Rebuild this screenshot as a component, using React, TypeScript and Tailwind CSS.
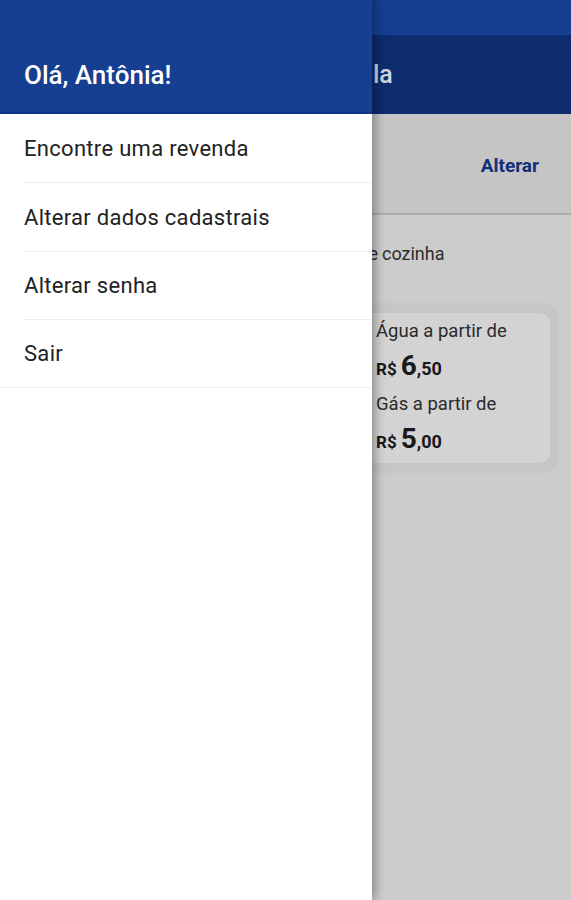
import React from "react";

const font = { fontFamily: "Roboto, 'Noto Sans', Arial, sans-serif" };

function MenuItem({ label, full, h }: { label: string; full?: boolean; h: string }) {
  return (
    <div className={`relative flex items-center ${h}`}>
      <span className="pl-6 text-[22px] tracking-[0.3px] text-[#222222] leading-none">{label}</span>
      <div
        className={
          full
            ? "absolute bottom-0 left-0 right-0 h-px bg-[#ececec]"
            : "absolute bottom-0 left-6 right-0 h-px bg-[#ececec]"
        }
      />
    </div>
  );
}

export default function App() {
  return (
    <div className="relative w-[571px] h-[900px] overflow-hidden bg-[#cccccc]" style={font}>
      {/* background page (dimmed) */}
      <div className="flex flex-col h-full">
        <div className="h-[35px] bg-[#163e91]" />
        <div className="h-[79px] bg-[#0c2c6d] flex items-center">
          <div className="w-[373px] text-right text-[25px] font-medium text-[#d2d5dd] whitespace-nowrap overflow-hidden">
            Revenda Vi
          </div>
          <span className="text-[25px] font-medium text-[#d2d5dd]">la</span>
        </div>
        <div className="h-[101px] bg-[#c5c5c5] flex items-center justify-end pr-[32px] pt-[6px] border-b-2 border-[#adadad]">
          <span className="text-[19px] font-bold text-[#12307a]">Alterar</span>
        </div>
        <div className="flex items-center mt-[25px]">
          <div className="w-[378px] text-right text-[18px] text-[#2c2c2c] whitespace-nowrap overflow-hidden">
            Distribuidora de água e gás de
          </div>
          <span className="text-[18px] text-[#2c2c2c] pl-[4px]">cozinha</span>
        </div>
        <div className="flex mt-[36px]">
          <div className="w-[300px]" />
          <div className="w-[258px] h-[170px] rounded-[14px] bg-[#c6c6c6] pt-[10px] pr-[8px] pb-[10px]">
            <div className="h-full rounded-[10px] bg-[#d3d3d3] pl-[76px] pt-[6px] text-[#2a2a2a]">
              <div className="text-[18.5px] leading-[24px]">Água a partir de</div>
              <div className="mt-[6px] flex items-baseline font-bold text-[#181818] leading-[34px]">
                <span className="text-[17px] mr-[4px]">R$</span>
                <span className="text-[28px]">6</span>
                <span className="text-[18px]">,50</span>
              </div>
              <div className="mt-[6px] text-[18.5px] leading-[24px]">Gás a partir de</div>
              <div className="mt-[6px] flex items-baseline font-bold text-[#181818] leading-[34px]">
                <span className="text-[17px] mr-[4px]">R$</span>
                <span className="text-[28px]">5</span>
                <span className="text-[18px]">,00</span>
              </div>
            </div>
          </div>
        </div>
      </div>

      {/* drawer */}
      <div className="absolute top-0 left-0 bottom-0 w-[372px] bg-white shadow-[3px_0_10px_rgba(0,0,0,0.35)]">
        <div className="h-[114px] bg-[#163e91] border-b-2 border-[#0f3386] flex items-end pb-[24px] pl-6">
          <span className="text-[26px] font-medium text-white leading-none">Olá, Antônia!</span>
        </div>
        <MenuItem label="Encontre uma revenda" h="h-[69px]" />
        <MenuItem label="Alterar dados cadastrais" h="h-[69px]" />
        <MenuItem label="Alterar senha" h="h-[68px]" />
        <MenuItem label="Sair" full h="h-[68px]" />
      </div>
    </div>
  );
}
